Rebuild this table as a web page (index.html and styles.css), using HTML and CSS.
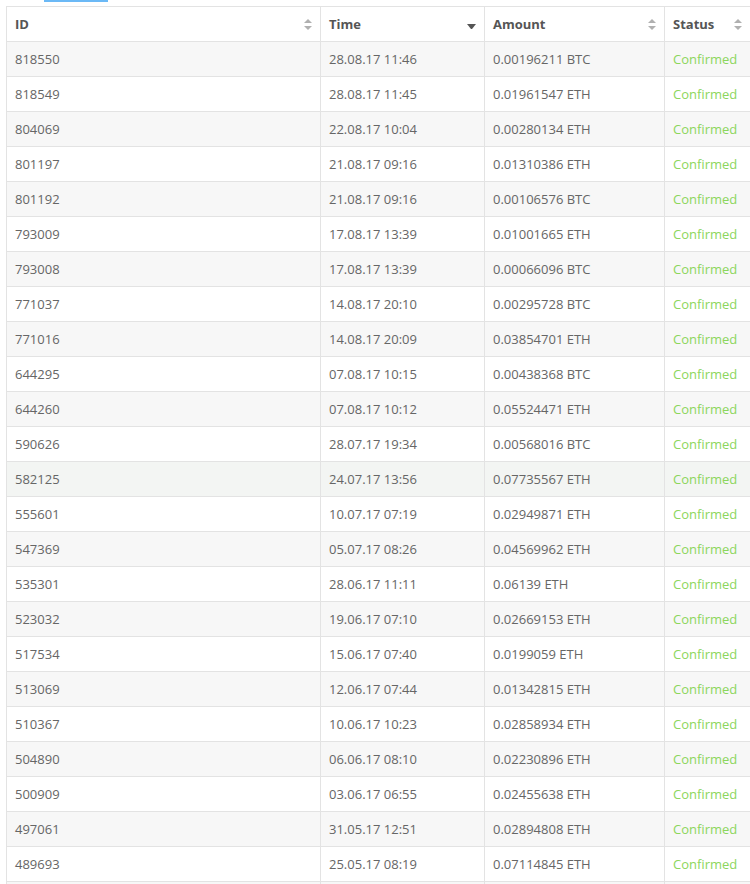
FILE: index.html
```html
<!DOCTYPE html>
<html>
<head>
<meta charset="utf-8">
<link rel="stylesheet" href="styles.css">
</head>
<body>
<div class="tabbar"><span class="tab-active"></span></div>
<table class="tx">
  <colgroup>
    <col class="c-id"><col class="c-time"><col class="c-amount"><col class="c-status">
  </colgroup>
  <thead>
    <tr>
      <th><span class="th-in">ID <i class="sort both"></i></span></th>
      <th><span class="th-in">Time <i class="sort desc"></i></span></th>
      <th><span class="th-in">Amount <i class="sort both"></i></span></th>
      <th><span class="th-in">Status <i class="sort both"></i></span></th>
    </tr>
  </thead>
  <tbody>
    <tr><td>818550</td><td>28.08.17 11:46</td><td>0.00196211 BTC</td><td class="ok">Confirmed</td></tr>
    <tr><td>818549</td><td>28.08.17 11:45</td><td>0.01961547 ETH</td><td class="ok">Confirmed</td></tr>
    <tr><td>804069</td><td>22.08.17 10:04</td><td>0.00280134 ETH</td><td class="ok">Confirmed</td></tr>
    <tr><td>801197</td><td>21.08.17 09:16</td><td>0.01310386 ETH</td><td class="ok">Confirmed</td></tr>
    <tr><td>801192</td><td>21.08.17 09:16</td><td>0.00106576 BTC</td><td class="ok">Confirmed</td></tr>
    <tr><td>793009</td><td>17.08.17 13:39</td><td>0.01001665 ETH</td><td class="ok">Confirmed</td></tr>
    <tr><td>793008</td><td>17.08.17 13:39</td><td>0.00066096 BTC</td><td class="ok">Confirmed</td></tr>
    <tr><td>771037</td><td>14.08.17 20:10</td><td>0.00295728 BTC</td><td class="ok">Confirmed</td></tr>
    <tr><td>771016</td><td>14.08.17 20:09</td><td>0.03854701 ETH</td><td class="ok">Confirmed</td></tr>
    <tr><td>644295</td><td>07.08.17 10:15</td><td>0.00438368 BTC</td><td class="ok">Confirmed</td></tr>
    <tr><td>644260</td><td>07.08.17 10:12</td><td>0.05524471 ETH</td><td class="ok">Confirmed</td></tr>
    <tr><td>590626</td><td>28.07.17 19:34</td><td>0.00568016 BTC</td><td class="ok">Confirmed</td></tr>
    <tr class="hover"><td>582125</td><td>24.07.17 13:56</td><td>0.07735567 ETH</td><td class="ok">Confirmed</td></tr>
    <tr><td>555601</td><td>10.07.17 07:19</td><td>0.02949871 ETH</td><td class="ok">Confirmed</td></tr>
    <tr><td>547369</td><td>05.07.17 08:26</td><td>0.04569962 ETH</td><td class="ok">Confirmed</td></tr>
    <tr><td>535301</td><td>28.06.17 11:11</td><td>0.06139 ETH</td><td class="ok">Confirmed</td></tr>
    <tr><td>523032</td><td>19.06.17 07:10</td><td>0.02669153 ETH</td><td class="ok">Confirmed</td></tr>
    <tr><td>517534</td><td>15.06.17 07:40</td><td>0.0199059 ETH</td><td class="ok">Confirmed</td></tr>
    <tr><td>513069</td><td>12.06.17 07:44</td><td>0.01342815 ETH</td><td class="ok">Confirmed</td></tr>
    <tr><td>510367</td><td>10.06.17 10:23</td><td>0.02858934 ETH</td><td class="ok">Confirmed</td></tr>
    <tr><td>504890</td><td>06.06.17 08:10</td><td>0.02230896 ETH</td><td class="ok">Confirmed</td></tr>
    <tr><td>500909</td><td>03.06.17 06:55</td><td>0.02455638 ETH</td><td class="ok">Confirmed</td></tr>
    <tr><td>497061</td><td>31.05.17 12:51</td><td>0.02894808 ETH</td><td class="ok">Confirmed</td></tr>
    <tr><td>489693</td><td>25.05.17 08:19</td><td>0.07114845 ETH</td><td class="ok">Confirmed</td></tr>
    <tr><td></td><td></td><td></td><td></td></tr>
  </tbody>
</table>
</body>
</html>
```
FILE: styles.css
```css
html, body {
  margin: 0;
  padding: 0;
  background: #fff;
  font-family: "Open Sans", "Noto Sans", sans-serif;
  font-size: 13px;
  color: #666;
}
.tabbar {
  height: 6px;
  padding-left: 44px;
}
.tab-active {
  display: block;
  width: 64px;
  height: 2px;
  background: #6bb9f6;
}
.tx {
  margin-left: 6px;
  width: 744px;
  border-collapse: collapse;
  table-layout: fixed;
}
.c-id { width: 314px; }
.c-time { width: 164px; }
.c-amount { width: 180px; }
.c-status { width: 86px; }
.tx th, .tx td {
  border: 1px solid #e3e3e3;
  height: 35px;
  padding: 0 8px;
  text-align: left;
  box-sizing: border-box;
  white-space: nowrap;
}
.tx th {
  font-weight: 700;
  color: #555;
}
.th-in {
  display: flex;
  justify-content: space-between;
  align-items: center;
}
.sort {
  display: inline-block;
  position: relative;
  width: 8px;
  height: 11px;
}
.sort.both::before, .sort.both::after {
  content: "";
  position: absolute;
  left: 0;
  border-left: 4px solid transparent;
  border-right: 4px solid transparent;
}
.sort.both::before {
  top: 0;
  border-bottom: 4px solid #b0b0b0;
}
.sort.both::after {
  bottom: 0;
  border-top: 4px solid #b0b0b0;
}
.sort.desc {
  width: 9px;
  height: 5px;
  margin-top: 4px;
  border-left: 4.5px solid transparent;
  border-right: 4.5px solid transparent;
  border-top: 5px solid #555;
  box-sizing: border-box;
}
.tx tbody tr:nth-child(odd) td { background: #f7f7f7; }
.tx tbody tr.hover td { background: #f3f5f3; }
.tx td.ok { color: #8cd65c; }
```
